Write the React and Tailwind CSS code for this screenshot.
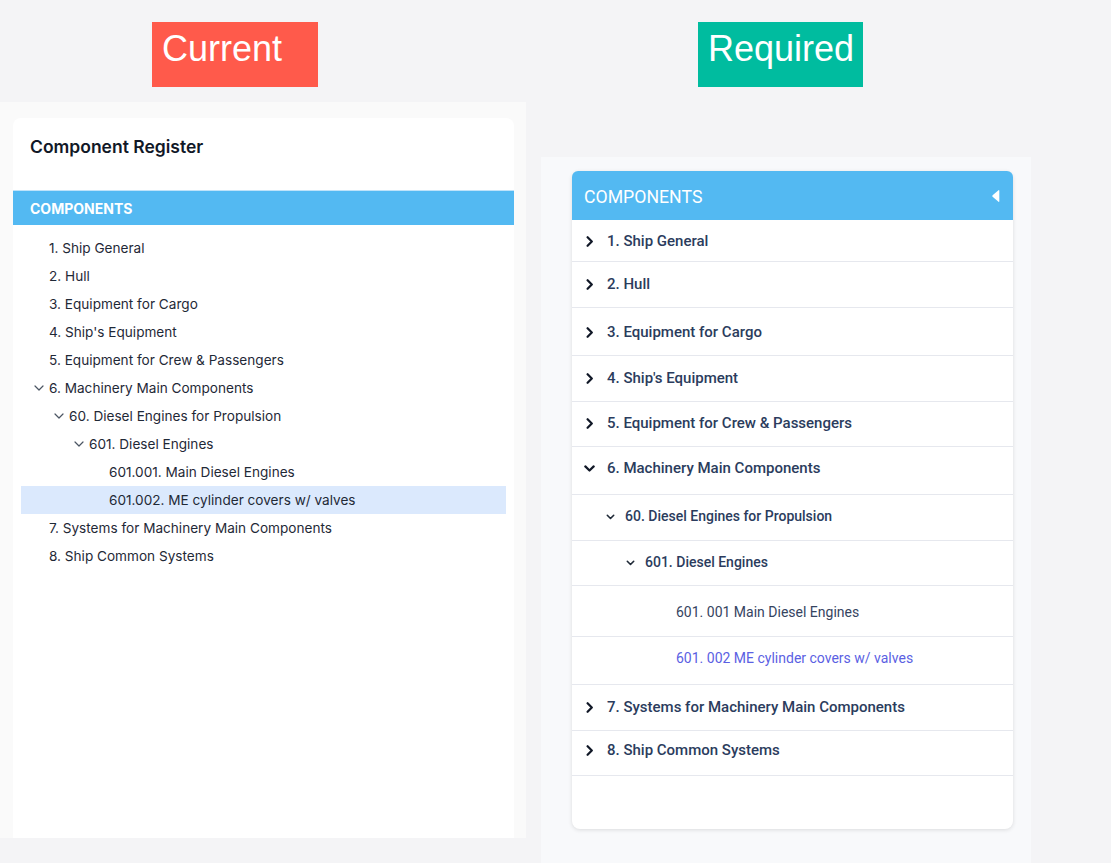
import React from "react";

const currentTree = [
  { label: "1. Ship General", pad: "pl-[12px]" },
  { label: "2. Hull", pad: "pl-[12px]" },
  { label: "3. Equipment for Cargo", pad: "pl-[12px]" },
  { label: "4. Ship's Equipment", pad: "pl-[12px]" },
  { label: "5. Equipment for Crew & Passengers", pad: "pl-[12px]" },
  { label: "6. Machinery Main Components", pad: "pl-[12px]", open: true },
  { label: "60. Diesel Engines for Propulsion", pad: "pl-[32px]", open: true },
  { label: "601. Diesel Engines", pad: "pl-[52px]", open: true },
  { label: "601.001. Main Diesel Engines", pad: "pl-[72px]" },
  { label: "601.002. ME cylinder covers w/ valves", pad: "pl-[72px]", selected: true },
  { label: "7. Systems for Machinery Main Components", pad: "pl-[12px]" },
  { label: "8. Ship Common Systems", pad: "pl-[12px]" },
];

const requiredTree = [
  { label: "1. Ship General", kind: "closed", row: "h-[42px] pt-[2px]" },
  { label: "2. Hull", kind: "closed", row: "h-[46px]" },
  { label: "3. Equipment for Cargo", kind: "closed", row: "h-[48px] pt-[1px]" },
  { label: "4. Ship's Equipment", kind: "closed", row: "h-[46px] pb-[1px]" },
  { label: "5. Equipment for Crew & Passengers", kind: "closed", row: "h-[45px] pb-[2px]" },
  { label: "6. Machinery Main Components", kind: "open", row: "h-[48px] pb-[5px]" },
  { label: "60. Diesel Engines for Propulsion", kind: "open2", row: "h-[46px] pb-[2px]" },
  { label: "601. Diesel Engines", kind: "open3", row: "h-[45px] pb-[1px]" },
  { label: "601. 001 Main Diesel Engines", kind: "leaf", row: "h-[51px] pt-[2px]" },
  { label: "601. 002 ME cylinder covers w/ valves", kind: "leaf", selected: true, row: "h-[48px] pb-[4px]" },
  { label: "7. Systems for Machinery Main Components", kind: "closed", row: "h-[46px] pb-[1px]" },
  { label: "8. Ship Common Systems", kind: "closed", row: "h-[45px] pb-[5px]" },
];

function ThinChevronDown() {
  return (
    <svg width="10" height="6" viewBox="0 0 10 6" fill="none">
      <path d="M1 1l4 4 4-4" stroke="#4b5563" strokeWidth="1.2" strokeLinecap="round" strokeLinejoin="round" />
    </svg>
  );
}

function BoldChevronRight() {
  return (
    <svg width="8" height="11" viewBox="0 0 8 11" fill="none">
      <path d="M1.6 1.2l4.2 4.3-4.2 4.3" stroke="#111827" strokeWidth="2.2" strokeLinecap="round" strokeLinejoin="round" />
    </svg>
  );
}

function BoldChevronDown({ small }) {
  return small ? (
    <svg width="9" height="6" viewBox="0 0 9 6" fill="none">
      <path d="M1.3 1.3l3.2 3.2 3.2-3.2" stroke="#1f2937" strokeWidth="1.6" strokeLinecap="round" strokeLinejoin="round" />
    </svg>
  ) : (
    <svg width="11" height="7" viewBox="0 0 11 7" fill="none">
      <path d="M1.3 1.4l4.2 4.1 4.2-4.1" stroke="#111827" strokeWidth="2.2" strokeLinecap="round" strokeLinejoin="round" />
    </svg>
  );
}

function CurrentPanel() {
  return (
    <div className="mt-[15px] h-[736px] bg-[#fafafa] pt-[16px] pl-[13px] pr-[12px] flex flex-col">
      <div className="flex-1 bg-white rounded-t-lg flex flex-col">
        <h2 className="pt-[17px] pl-[17px] text-[17.5px] leading-[24px] font-semibold text-[#111827] font-['Inter',sans-serif]">
          Component Register
        </h2>
        <div className="mt-[31px] h-[35px] bg-[#53b9f2] flex items-center pl-[17px] border-t border-[#bfe3fa]">
          <span className="text-white text-[14px] font-bold font-['Inter',sans-serif]">COMPONENTS</span>
        </div>
        <ul className="pt-[9px] px-[8px] font-['Inter',sans-serif] text-[13.6px] text-[#1f2937]">
          {currentTree.map((item) => (
            <li
              key={item.label}
              className={`h-[28px] flex items-center ${item.pad} ${item.selected ? "bg-[#dbe9fd]" : ""}`}
            >
              <span className="w-[12px] mr-[4px] flex items-center justify-center">
                {item.open && <ThinChevronDown />}
              </span>
              <span>{item.label}</span>
            </li>
          ))}
        </ul>
      </div>
    </div>
  );
}

function RequiredRow({ item }) {
  const base = `${item.row} flex items-center border-b border-[#e6e8ee]`;
  if (item.kind === "closed" || item.kind === "open") {
    return (
      <div className={`${base} pl-[12px]`}>
        <span className="w-[11px] mr-[12px] flex items-center justify-center">
          {item.kind === "open" ? <BoldChevronDown /> : <BoldChevronRight />}
        </span>
        <span className="text-[15px] font-medium text-[#2b3c5d]">{item.label}</span>
      </div>
    );
  }
  if (item.kind === "open2" || item.kind === "open3") {
    return (
      <div className={`${base} ${item.kind === "open2" ? "pl-[34px]" : "pl-[54px]"}`}>
        <span className="w-[9px] mr-[10px] flex items-center justify-center">
          <BoldChevronDown small />
        </span>
        <span className="text-[14px] font-medium text-[#2b3c5d]">{item.label}</span>
      </div>
    );
  }
  return (
    <div className={`${base} pl-[104px]`}>
      <span className={`text-[14px] ${item.selected ? "text-[#5b5fe3]" : "text-[#36445f]"}`}>{item.label}</span>
    </div>
  );
}

function RequiredPanel() {
  return (
    <div className="mt-[70px] flex-1 bg-[#f8f9fb] pt-[14px] pl-[31px] pr-[18px]">
      <div className="h-[658px] bg-white rounded-lg shadow-[0_1px_4px_rgba(0,0,0,0.12)] flex flex-col font-['Roboto',sans-serif]">
        <div className="h-[49px] bg-[#53b9f2] rounded-t-md flex items-center justify-between pl-[12px] pr-[13px] pt-[3px]">
          <span className="text-white text-[17.7px]">COMPONENTS</span>
          <svg width="9" height="14" viewBox="0 0 9 14" className="-mt-[3px]">
            <path d="M7.5 1.2 L1.6 6.2 Q0.9 7 1.6 7.8 L7.5 12.8 Q8.3 13.3 8.3 12.3 L8.3 1.7 Q8.3 0.7 7.5 1.2 Z" fill="#ffffff" />
          </svg>
        </div>
        <div className="flex flex-col">
          {requiredTree.map((item) => (
            <RequiredRow key={item.label} item={item} />
          ))}
        </div>
      </div>
    </div>
  );
}

export default function App() {
  return (
    <div className="w-[1111px] h-[863px] bg-[#f4f4f6] flex overflow-hidden">
      <div className="w-[526px] flex flex-col">
        <div className="pt-[22px] pl-[152px]">
          <div className="w-[166px] h-[65px] bg-[#ff5a4b] pt-[9px] pl-[10px]">
            <span className="text-white text-[36px] leading-none font-['Liberation_Sans',Arial,sans-serif]">Current</span>
          </div>
        </div>
        <CurrentPanel />
      </div>
      <div className="ml-[15px] w-[490px] flex flex-col">
        <div className="pt-[22px] pl-[157px]">
          <div className="w-[165px] h-[65px] bg-[#00bc9f] pt-[9px] pl-[10px]">
            <span className="text-white text-[36px] leading-none font-['Liberation_Sans',Arial,sans-serif]">Required</span>
          </div>
        </div>
        <RequiredPanel />
      </div>
    </div>
  );
}
